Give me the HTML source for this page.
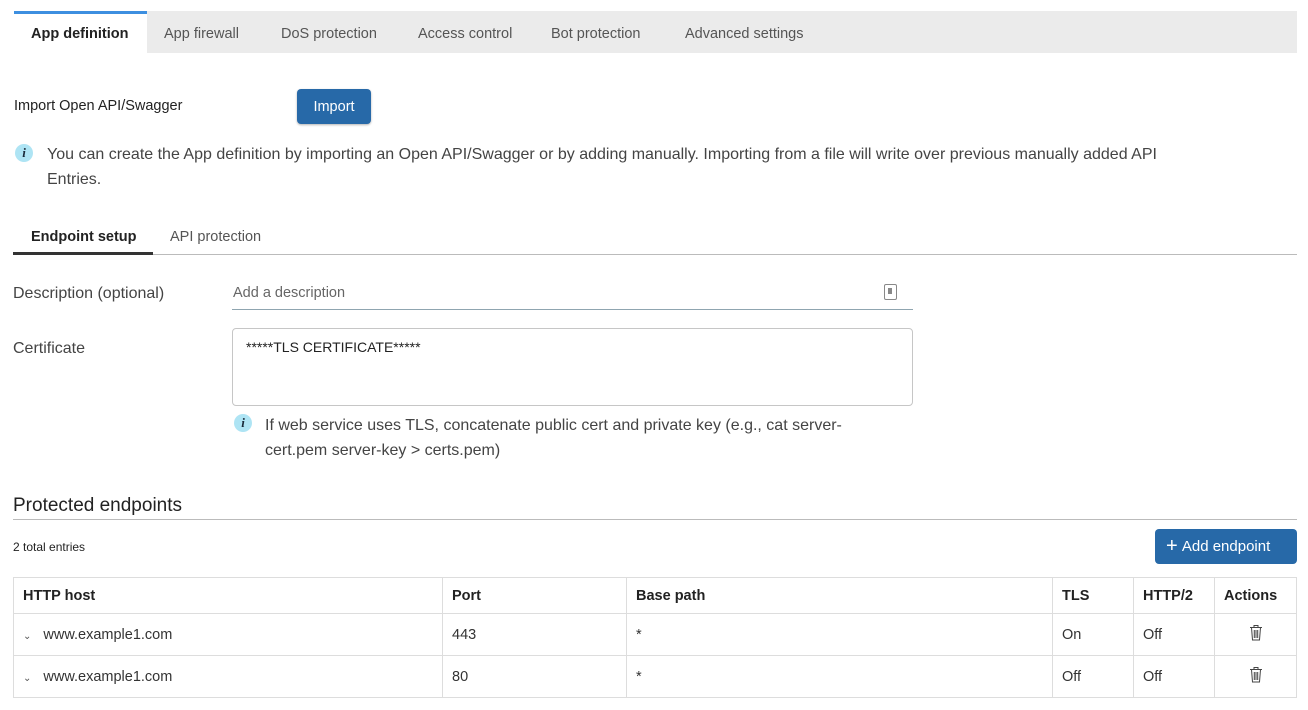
<!DOCTYPE html>
<html><head><meta charset="utf-8"><style>
*{box-sizing:border-box;margin:0;padding:0}
body{width:1308px;height:710px;background:#fff;font-family:"Liberation Sans",sans-serif;color:#333;position:relative;overflow:hidden;font-size:15px}
.a{position:absolute;white-space:nowrap}
.tabbar{position:absolute;left:14px;top:11px;width:1283px;height:42px;background:#ebebeb}
.tab{position:absolute;top:26px;font-size:14.5px;color:#555}
.info{position:absolute;width:18px;height:18px;border-radius:50%;background:#aee4f4;color:#1a2a3a;font:bold italic 13px "Liberation Serif",serif;text-align:center;line-height:18px}
table{position:absolute;left:13px;top:577px;width:1284px;border-collapse:collapse;font-size:14.5px}
td,th{border:1px solid #ddd;padding:0 9px;text-align:left;height:36px}
th{font-weight:bold;color:#222}
tr.r td{height:42px}
</style></head><body>
<div class="tabbar"></div>
<div class="a" style="left:14px;top:11px;width:133px;height:42px;background:#fff;border-top:3px solid #3d8fe0"></div>
<div class="tab" style="left:31px;color:#222;font-weight:bold">App definition</div>
<div class="tab" style="left:164px">App firewall</div>
<div class="tab" style="left:281px">DoS protection</div>
<div class="tab" style="left:418px">Access control</div>
<div class="tab" style="left:551px">Bot protection</div>
<div class="tab" style="left:685px">Advanced settings</div>

<div class="a" style="left:14px;top:98px;font-size:14.5px;color:#222">Import Open API/Swagger</div>
<div class="a" style="left:297px;top:89px;width:74px;height:35px;background:#2769a8;border-radius:4px;color:#fff;font-size:14.5px;text-align:center;line-height:36px;box-shadow:0 1px 2px rgba(0,0,0,.3)">Import</div>

<div class="info" style="left:15px;top:144px">i</div>
<div class="a" style="left:47px;top:142px;font-size:16px;color:#444;line-height:25px;white-space:normal;width:1140px">You can create the App definition by importing an Open API/Swagger or by adding manually. Importing from a file will write over previous manually added API Entries.</div>

<div class="a" style="left:31px;top:229px;font-size:14.5px;font-weight:bold;color:#222">Endpoint setup</div>
<div class="a" style="left:170px;top:229px;font-size:14.5px;color:#555">API protection</div>
<div class="a" style="left:13px;top:254px;width:1284px;height:1px;background:#bbb"></div>
<div class="a" style="left:13px;top:252px;width:140px;height:3px;background:#333"></div>

<div class="a" style="left:13px;top:285px;font-size:16px;color:#444">Description (optional)</div>
<div class="a" style="left:233px;top:285px;font-size:14.5px;color:#666">Add a description</div>
<div class="a" style="left:884px;top:284px;width:13px;height:16px;border:1.5px solid #888;border-radius:2px"><div style="position:absolute;left:3px;top:3px;width:4px;height:6px;background:#888"></div></div>
<div class="a" style="left:232px;top:309px;width:681px;height:1px;background:#8fa5b0"></div>

<div class="a" style="left:13px;top:340px;font-size:16px;color:#444">Certificate</div>
<div class="a" style="left:232px;top:328px;width:681px;height:78px;border:1px solid #c6c6c6;border-radius:4px"></div>
<div class="a" style="left:246px;top:339px;font-size:14px;color:#222">*****TLS CERTIFICATE*****</div>

<div class="info" style="left:234px;top:414px">i</div>
<div class="a" style="left:265px;top:413px;font-size:16px;color:#444;line-height:25px;white-space:normal;width:620px">If web service uses TLS, concatenate public cert and private key (e.g., cat server-cert.pem server-key &gt; certs.pem)</div>

<div class="a" style="left:13px;top:495px;font-size:19px;color:#222">Protected endpoints</div>
<div class="a" style="left:13px;top:519px;width:1284px;height:1px;background:#bbb"></div>
<div class="a" style="left:13px;top:540px;font-size:12px;color:#222">2 total entries</div>
<div class="a" style="left:1155px;top:529px;width:142px;height:35px;background:#2769a8;border-radius:4px;color:#fff;font-size:15px;line-height:35px;padding-left:11px"><span style="font-size:20px;font-weight:300;vertical-align:-1px">+</span>&nbsp;Add endpoint</div>

<table>
<tr><th style="width:429px">HTTP host</th><th style="width:184px">Port</th><th style="width:426px">Base path</th><th style="width:81px">TLS</th><th style="width:81px">HTTP/2</th><th>Actions</th></tr>
<tr class="r"><td><span style="font-size:10px;color:#555;margin-right:12px">&#8964;</span>www.example1.com</td><td>443</td><td>*</td><td>On</td><td>Off</td><td style="text-align:center"><svg width="14" height="17" viewBox="0 0 14 17" fill="none" stroke="#444" stroke-width="1"><path d="M1 3.5h12M5 3.5V1.5h4v2M2.5 3.5l1 12.5h7l1-12.5M5.3 6v8M7 6v8M8.7 6v8"/></svg></td></tr>
<tr class="r"><td><span style="font-size:10px;color:#555;margin-right:12px">&#8964;</span>www.example1.com</td><td>80</td><td>*</td><td>Off</td><td>Off</td><td style="text-align:center"><svg width="14" height="17" viewBox="0 0 14 17" fill="none" stroke="#444" stroke-width="1"><path d="M1 3.5h12M5 3.5V1.5h4v2M2.5 3.5l1 12.5h7l1-12.5M5.3 6v8M7 6v8M8.7 6v8"/></svg></td></tr>
</table>
</body></html>
